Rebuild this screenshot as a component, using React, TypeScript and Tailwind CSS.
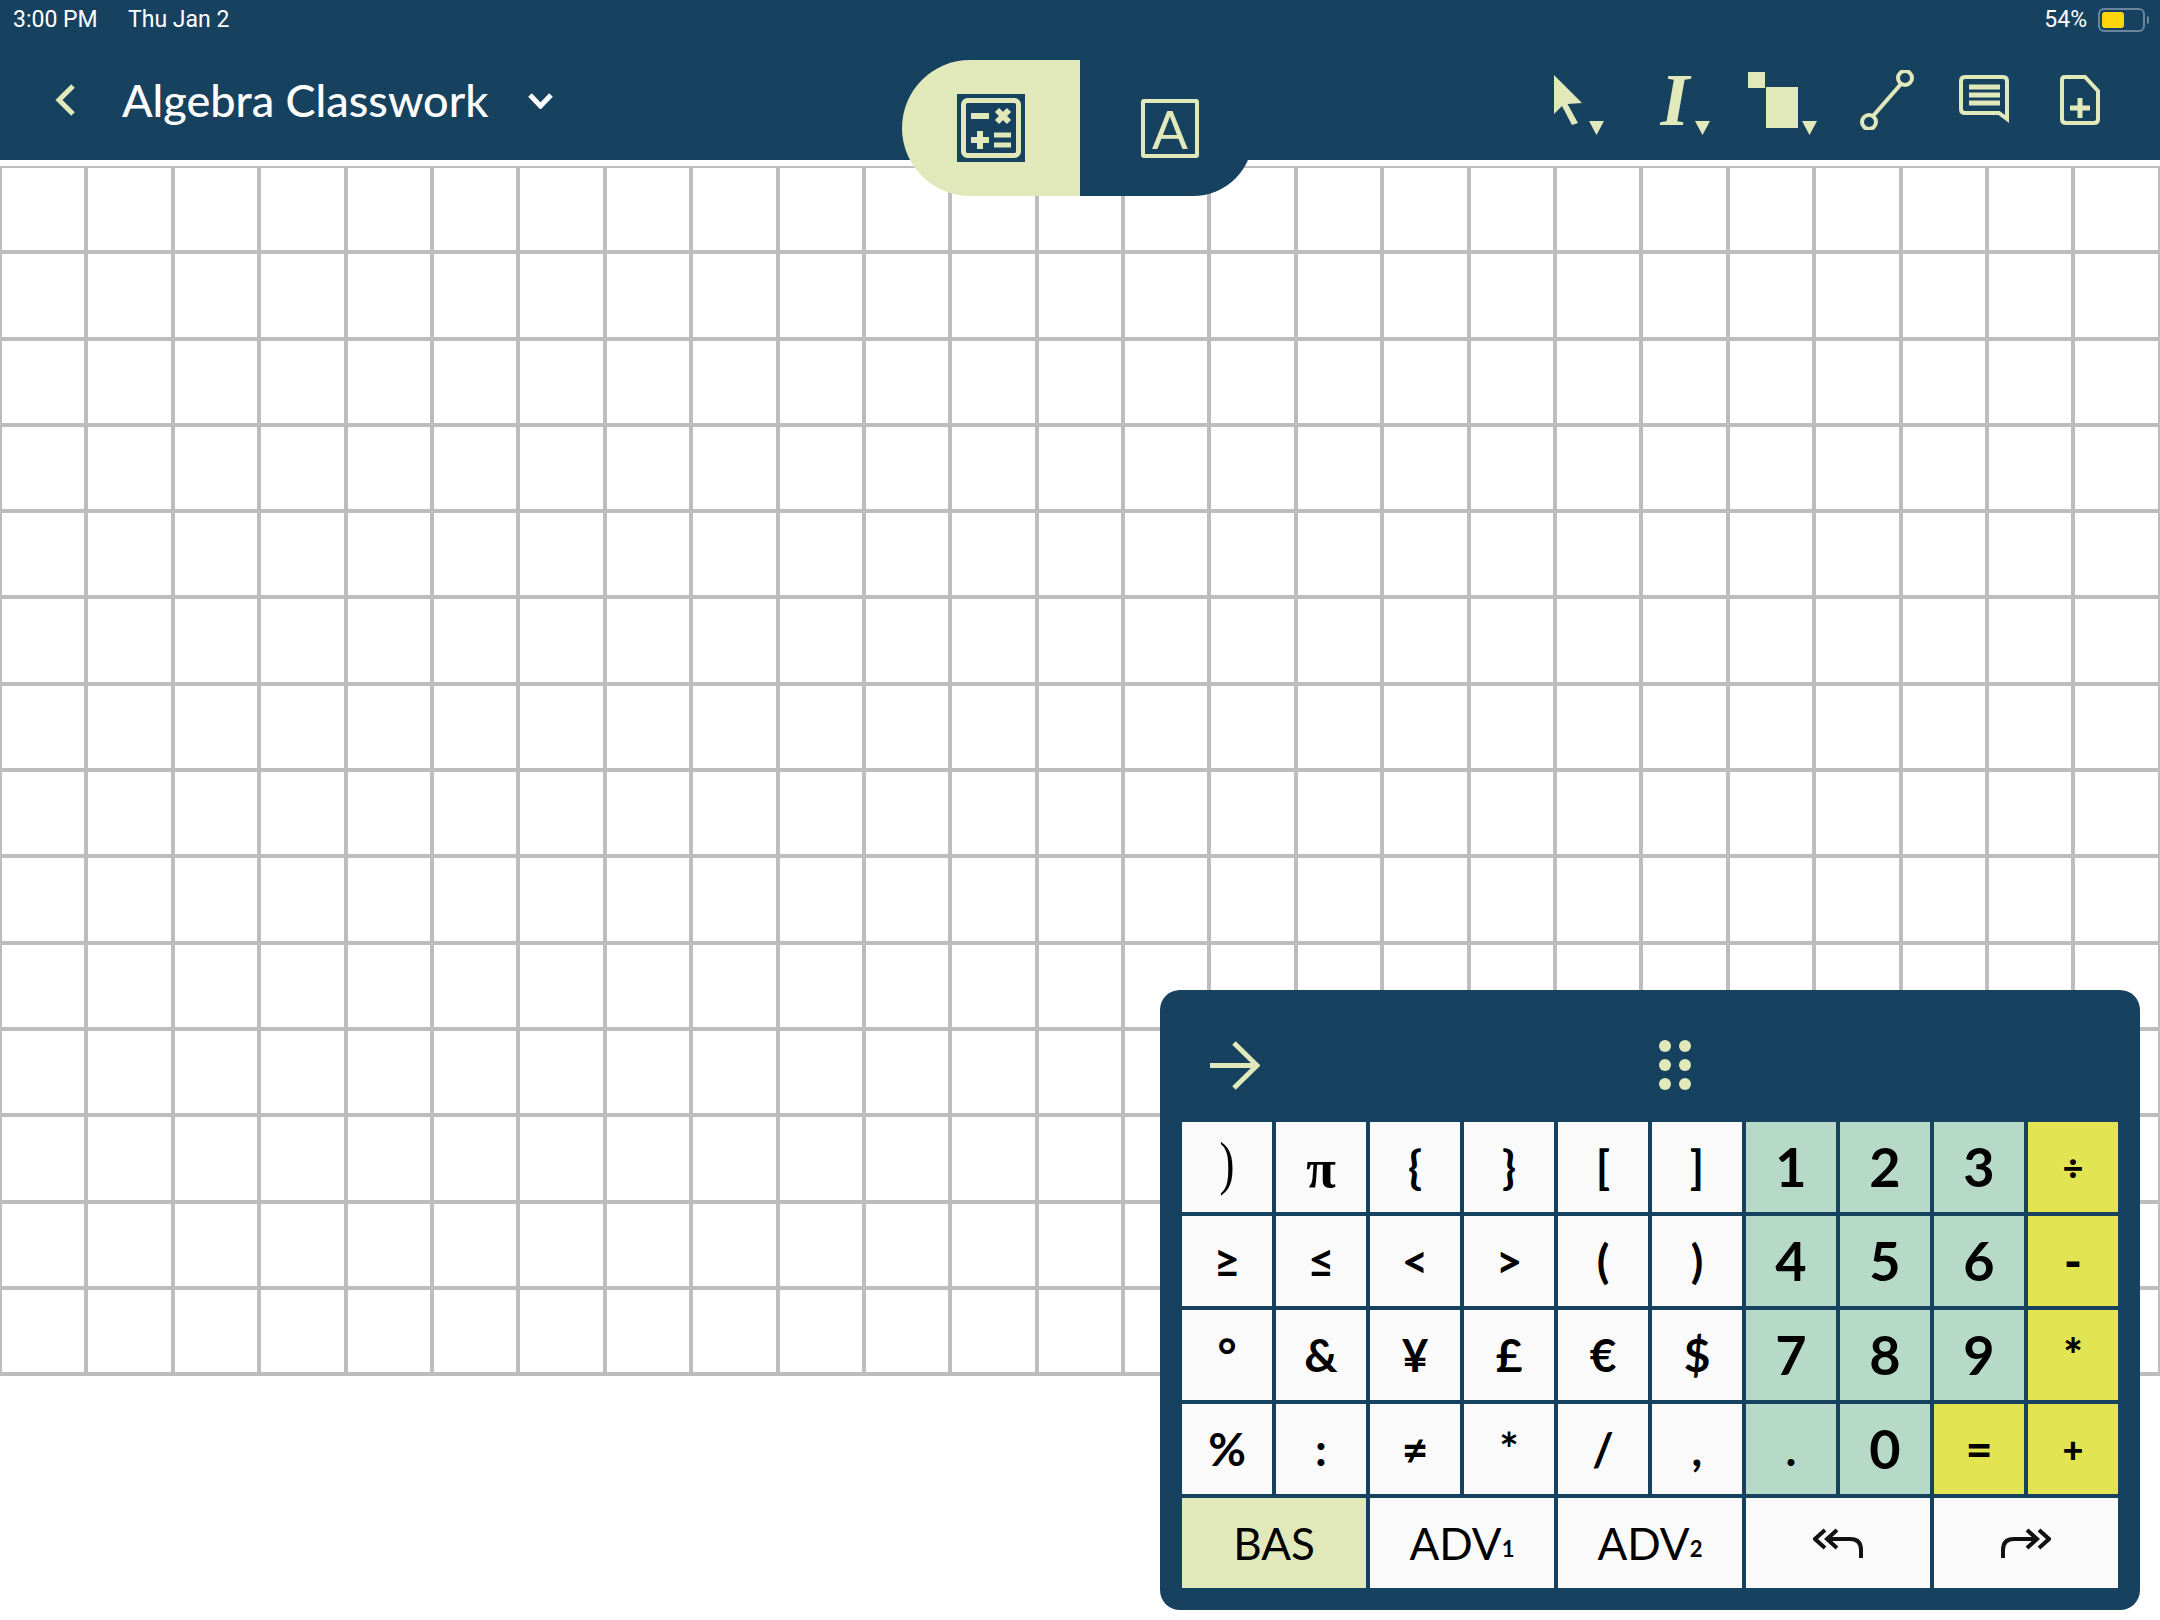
import React from 'react';

const NAVY = '#17425f';
const PALE = '#e1e9bb';

interface KeyInfo {
  label: React.ReactNode;
  className?: string;
  textClass?: string;
}

const big = 'text-[54px] font-bold';
const mid = 'text-[46px] font-bold';
const small = 'text-[36px] font-black';

const KEYS: KeyInfo[] = [
  { label: ')', textClass: "text-[60px] font-normal font-['Liberation_Serif'] -translate-y-[4px] scale-x-75" },
  { label: 'π', textClass: `${big} font-['Liberation_Serif'] translate-y-[2px]` },
  { label: '{', textClass: mid },
  { label: '}', textClass: mid },
  { label: '[', textClass: mid },
  { label: ']', textClass: mid },
  { label: '1', className: 'bg-[#b7d9c8]', textClass: big },
  { label: '2', className: 'bg-[#b7d9c8]', textClass: big },
  { label: '3', className: 'bg-[#b7d9c8]', textClass: big },
  { label: '÷', className: 'bg-[#e2e452]', textClass: small },
  { label: '≥', textClass: mid },
  { label: '≤', textClass: mid },
  { label: '<', textClass: mid },
  { label: '>', textClass: mid },
  { label: '(', textClass: mid },
  { label: ')', textClass: mid },
  { label: '4', className: 'bg-[#b7d9c8]', textClass: big },
  { label: '5', className: 'bg-[#b7d9c8]', textClass: big },
  { label: '6', className: 'bg-[#b7d9c8]', textClass: big },
  { label: '-', className: 'bg-[#e2e452]', textClass: 'text-[48px] font-black' },
  { label: '°', textClass: mid },
  { label: '&', textClass: mid },
  { label: '¥', textClass: mid },
  { label: '£', textClass: mid },
  { label: '€', textClass: mid },
  { label: '$', textClass: mid },
  { label: '7', className: 'bg-[#b7d9c8]', textClass: big },
  { label: '8', className: 'bg-[#b7d9c8]', textClass: big },
  { label: '9', className: 'bg-[#b7d9c8]', textClass: big },
  { label: '*', className: 'bg-[#e2e452]', textClass: 'text-[46px] font-black' },
  { label: '%', textClass: mid },
  { label: ':', textClass: mid },
  { label: '≠', textClass: mid },
  { label: '*', textClass: mid },
  { label: '/', textClass: mid },
  { label: ',', textClass: mid },
  { label: '.', className: 'bg-[#b7d9c8]', textClass: mid },
  { label: '0', className: 'bg-[#b7d9c8]', textClass: big },
  { label: '=', className: 'bg-[#e2e452]', textClass: 'text-[46px] font-black' },
  { label: '+', className: 'bg-[#e2e452]', textClass: small },
];

const Caret = ({ className }: { className: string }) => (
  <svg width="15" height="14" viewBox="0 0 15 14" className={className}>
    <polygon points="0,0 15,0 7.5,14" fill={PALE} />
  </svg>
);

const UndoIcon = () => (
  <svg width="50" height="30" viewBox="0 0 50 30" fill="none" stroke="#111" strokeWidth="4">
    <path d="M12 2 L2 11 L12 20" />
    <path d="M24 2 L14 11 L24 20" />
    <path d="M14 11 H37 Q48 11 48 22 V30" />
  </svg>
);

const RedoIcon = () => (
  <svg width="50" height="30" viewBox="0 0 50 30" fill="none" stroke="#111" strokeWidth="4">
    <path d="M38 2 L48 11 L38 20" />
    <path d="M26 2 L36 11 L26 20" />
    <path d="M36 11 H13 Q2 11 2 22 V30" />
  </svg>
);

const App = () => {
  return (
    <div className="relative h-[1620px] w-[2160px] overflow-hidden bg-white font-['Lato',sans-serif]">
      <header className="flex h-[160px] flex-col bg-[#17425f]">
        <div className="flex h-[40px] items-center font-['Roboto',sans-serif] text-[23px] text-white">
          <span className="ml-[13px] w-[115px]">3:00 PM</span>
          <span>Thu Jan 2</span>
          <span className="ml-auto">54%</span>
          <div className="ml-[11px] flex items-center">
            <div className="h-[24px] w-[47px] rounded-[6px] border-2 border-[#6b8599] p-[2px]">
              <div className="h-full w-[22px] rounded-[3px] bg-[#ffd60a]" />
            </div>
            <div className="ml-[2px] mr-[11px] h-[8px] w-[2px] rounded-r bg-[#6b8599]" />
          </div>
        </div>
        <div className="flex flex-1 items-start">
          <svg width="20" height="32" viewBox="0 0 20 32" fill="none" stroke={PALE} strokeWidth="5" className="ml-[55px] mt-[44px]">
            <path d="M18 2 L4 16 L18 30" />
          </svg>
          <span className="ml-[47px] mt-[31px] text-[45px] leading-[58px] font-medium text-white">Algebra Classwork</span>
          <svg width="25" height="16" viewBox="0 0 25 16" fill="none" stroke="#fff" strokeWidth="5" className="ml-[40px] mt-[53px]">
            <path d="M2 2 L12.5 13 L23 2" />
          </svg>
          <div className="ml-auto mr-[60px] flex items-start">
            <svg width="28" height="50" viewBox="0 0 28 50" className="mt-[35px]">
              <polygon points="0,0 28,28 13.5,29 24,48 18,50 8,31 0,39" fill={PALE} />
            </svg>
            <Caret className="ml-[7px] mt-[81px]" />
            <span className="ml-[54px] mt-[23px] w-[34px] text-center font-['Liberation_Serif'] text-[74px] leading-[74px] font-bold italic text-[#e1e9bb]">I</span>
            <Caret className="ml-[3px] mt-[81px]" />
            <svg width="50" height="56" viewBox="0 0 50 56" className="ml-[38px] mt-[32px]">
              <rect x="0" y="0" width="17" height="16" fill={PALE} />
              <rect x="18" y="15" width="32" height="41" fill={PALE} />
            </svg>
            <Caret className="ml-[4px] mt-[81px]" />
            <svg width="54" height="60" viewBox="0 0 54 60" fill="none" stroke={PALE} strokeWidth="4" className="ml-[43px] mt-[30px]">
              <ellipse cx="45" cy="8" rx="7" ry="7" />
              <ellipse cx="9" cy="52" rx="7" ry="7" />
              <path d="M41 14 L13 46" />
            </svg>
            <svg width="50" height="50" viewBox="0 0 50 50" fill="none" stroke={PALE} strokeWidth="4" className="ml-[45px] mt-[35px]">
              <path d="M6 2 H44 Q48 2 48 6 V44 L40 38 H6 Q2 38 2 34 V6 Q2 2 6 2 Z" />
              <path d="M10 12 H41 M10 20 H41 M10 28 H41" strokeWidth="5" />
            </svg>
            <svg width="40" height="50" viewBox="0 0 40 50" fill="none" stroke={PALE} strokeWidth="4" className="ml-[51px] mt-[35px]">
              <path d="M5 2 H25 L38 16 V44 Q38 48 34 48 H6 Q2 48 2 44 V5 Q2 2 5 2 Z" />
              <path d="M20 23 V43 M10 33 H30" strokeWidth="5" />
            </svg>
          </div>
        </div>
      </header>

      <div className="mt-[6px] grid grid-cols-[repeat(25,86.4px)] auto-rows-[86.3px] border-b-2 border-[#bdbdbd]">
        {Array.from({ length: 25 * 14 }).map((_, i) => (
          <div key={i} className="border-2 border-[#bdbdbd]" />
        ))}
      </div>

      <div className="absolute left-[902px] top-[60px] flex h-[136px]">
        <div className="flex w-[178px] items-center rounded-l-[68px] bg-[#e1e9bb] pl-[55px]">
          <svg width="68" height="68" viewBox="0 0 68 68" fill="none" stroke={PALE} className="bg-[#17425f]">
            <rect x="6.5" y="6.5" width="55" height="55" rx="4" strokeWidth="5" />
            <path d="M14 22 H32" strokeWidth="6" />
            <path d="M40 16 L52 28 M52 16 L40 28" strokeWidth="6" />
            <path d="M14 46 H32 M23 37 V55" strokeWidth="6" />
            <path d="M37 41 H54 M37 51 H54" strokeWidth="5" />
          </svg>
        </div>
        <div className="w-[173px] rounded-br-[60px] bg-[#17425f] pl-[61px] pt-[39px]">
          <div className="flex h-[59px] w-[58px] items-center justify-center rounded-[3px] border-[4px] border-[#e1e9bb] text-[53px] leading-none text-[#e1e9bb]">A</div>
        </div>
      </div>

      <div className="absolute left-[1160px] top-[990px] h-[620px] w-[980px] rounded-[20px] bg-[#17425f] px-[22px] pb-[22px] pt-[132px]">
        <svg width="50" height="49" viewBox="0 0 50 49" fill="none" stroke={PALE} strokeWidth="5" className="absolute left-[50px] top-[51px]">
          <path d="M0 24.5 H47 M24 2 L47 24.5 L24 47" />
        </svg>
        <svg width="32" height="50" viewBox="0 0 32 50" fill={PALE} className="absolute left-[499px] top-[50px]">
          <circle cx="6" cy="6" r="6" />
          <circle cx="26" cy="6" r="6" />
          <circle cx="6" cy="25" r="6" />
          <circle cx="26" cy="25" r="6" />
          <circle cx="6" cy="44" r="6" />
          <circle cx="26" cy="44" r="6" />
        </svg>
        <div className="grid grid-cols-[repeat(10,90px)] auto-rows-[90px] gap-[4px] text-black">
          {KEYS.map((key, i) => (
            <div key={i} className={`flex items-center justify-center ${key.className ?? 'bg-[#fafafa]'}`}>
              <span className={`leading-none ${key.textClass}`}>{key.label}</span>
            </div>
          ))}
          <div className="col-span-2 flex items-center justify-center bg-[#e1e9bb] text-[44px]">BAS</div>
          <div className="col-span-2 flex items-center justify-center bg-[#fafafa] text-[44px]">
            ADV<sub className="text-[22px] font-bold">1</sub>
          </div>
          <div className="col-span-2 flex items-center justify-center bg-[#fafafa] text-[44px]">
            ADV<sub className="text-[22px] font-bold">2</sub>
          </div>
          <div className="col-span-2 flex items-center justify-center bg-[#fafafa]">
            <UndoIcon />
          </div>
          <div className="col-span-2 flex items-center justify-center bg-[#fafafa]">
            <RedoIcon />
          </div>
        </div>
      </div>
    </div>
  );
};

export default App;
